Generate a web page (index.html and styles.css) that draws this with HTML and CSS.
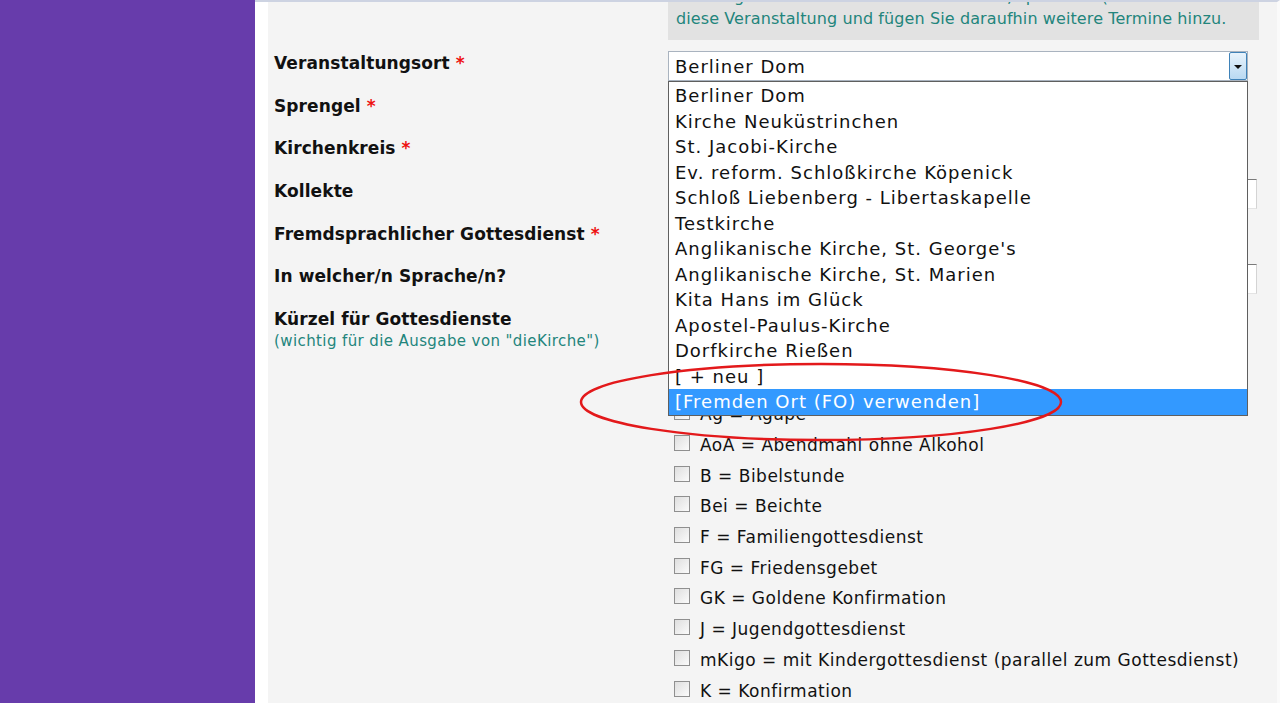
FILE: index.html
```html
<!DOCTYPE html>
<html lang="de">
<head>
    <meta charset="UTF-8">
    <title>Veranstaltung bearbeiten</title>
    <link rel="stylesheet" href="styles.css">
</head>
<body>
    <div class="page">
        <aside class="sidebar"></aside>
        <div class="gutter"></div>
        <main class="content">
            <div class="form">
                <div class="row row-info">
                    <div class="label"></div>
                    <div class="field">
                        <div class="info">Bitte legen Sie zunächst einen Termin an, speichern (Sie erhalten eine ID)<br>diese Veranstaltung und fügen Sie daraufhin weitere Termine hinzu.</div>
                    </div>
                </div>

                <div class="row">
                    <div class="label">Veranstaltungsort <span class="req">*</span></div>
                    <div class="field">
                        <div class="select-wrap">
                            <div class="select">
                                <span>Berliner Dom</span>
                                <span class="arrow"></span>
                            </div>
                            <ul class="options">
                                <li>Berliner Dom</li>
                                <li>Kirche Neuküstrinchen</li>
                                <li>St. Jacobi-Kirche</li>
                                <li>Ev. reform. Schloßkirche Köpenick</li>
                                <li>Schloß Liebenberg - Libertaskapelle</li>
                                <li>Testkirche</li>
                                <li>Anglikanische Kirche, St. George's</li>
                                <li>Anglikanische Kirche, St. Marien</li>
                                <li>Kita Hans im Glück</li>
                                <li>Apostel-Paulus-Kirche</li>
                                <li>Dorfkirche Rießen</li>
                                <li>[ + neu ]</li>
                                <li class="selected">[Fremden Ort (FO) verwenden]</li>
                            </ul>
                        </div>
                    </div>
                </div>

                <div class="row">
                    <div class="label">Sprengel <span class="req">*</span></div>
                    <div class="field"><div class="select small"><span></span><span class="arrow"></span></div></div>
                </div>

                <div class="row">
                    <div class="label">Kirchenkreis <span class="req">*</span></div>
                    <div class="field"><div class="select small"><span></span><span class="arrow"></span></div></div>
                </div>

                <div class="row">
                    <div class="label">Kollekte</div>
                    <div class="field"><div class="input"></div></div>
                </div>

                <div class="row">
                    <div class="label">Fremdsprachlicher Gottesdienst <span class="req">*</span></div>
                    <div class="field"></div>
                </div>

                <div class="row">
                    <div class="label">In welcher/n Sprache/n?</div>
                    <div class="field"><div class="input"></div></div>
                </div>

                <div class="row">
                    <div class="label">
                        Kürzel für Gottesdienste
                        <div class="hint">(wichtig für die Ausgabe von "dieKirche")</div>
                    </div>
                    <div class="field">
                        <ul class="checks">
                            <li><span class="box"></span>A = Abendmahl</li>
                            <li><span class="box"></span>Af = Andacht</li>
                            <li><span class="box"></span>AbM = Abendmusik</li>
                            <li><span class="box"></span>Ag = Agape</li>
                            <li><span class="box"></span>AoA = Abendmahl ohne Alkohol</li>
                            <li><span class="box"></span>B = Bibelstunde</li>
                            <li><span class="box"></span>Bei = Beichte</li>
                            <li><span class="box"></span>F = Familiengottesdienst</li>
                            <li><span class="box"></span>FG = Friedensgebet</li>
                            <li><span class="box"></span>GK = Goldene Konfirmation</li>
                            <li><span class="box"></span>J = Jugendgottesdienst</li>
                            <li><span class="box"></span>mKigo = mit Kindergottesdienst (parallel zum Gottesdienst)</li>
                            <li><span class="box"></span>K = Konfirmation</li>
                        </ul>
                    </div>
                </div>
            </div>
        </main>

        <svg class="marker" width="490" height="86" viewBox="0 0 490 86">
            <ellipse cx="244" cy="43" rx="240" ry="38" fill="none" stroke="#e3191b" stroke-width="2.5"/>
        </svg>
    </div>
</body>
</html>
```

FILE: styles.css
```css
body {
    margin: 0;
    padding: 0;
    font-family: "DejaVu Sans", Verdana, sans-serif;
    color: #111;
    overflow: hidden;
}
.page {
    display: flex;
    height: 703px;
    position: relative;
}
.sidebar {
    width: 255px;
    flex-shrink: 0;
    background-color: #673cab;
}
.gutter {
    width: 13px;
    flex-shrink: 0;
    background-color: #fff;
    border-top: 2px solid #cdd3e2;
}
.content {
    flex: 1;
    background-color: #f4f4f4;
    border-top: 2px solid #cdd3e2;
    border-right: 3px solid #fafafa;
    overflow: hidden;
}
.form {
    padding: 0 18px 0 6px;
    margin-top: -16px;
}
.row {
    display: grid;
    grid-template-columns: 394px minmax(0, 1fr);
    min-height: 30.67px;
    padding-bottom: 12px;
}
.row-info {
    padding-bottom: 11px;
}
.label {
    font-weight: bold;
    font-size: 17px;
    letter-spacing: 0.1px;
    line-height: 24px;
}
.req {
    color: #ee1111;
}
.hint {
    font-weight: normal;
    font-size: 15px;
    letter-spacing: 0.4px;
    line-height: 20px;
    color: #23857c;
}
.info {
    background-color: #e2e2e2;
    color: #23857c;
    font-size: 16px;
    letter-spacing: 0.1px;
    line-height: 22px;
    padding: 0 8px 10px;
    white-space: nowrap;
    overflow: hidden;
}

/* select box and open dropdown */
.select-wrap {
    position: relative;
    width: 580px;
    z-index: 5;
}
.select {
    height: 30px;
    box-sizing: border-box;
    border: 1px solid #a9b3bf;
    background-color: #fff;
    display: flex;
    align-items: center;
    justify-content: space-between;
    padding-left: 6px;
    font-size: 18px;
    letter-spacing: 1px;
}
.select.small {
    width: 300px;
}
.arrow {
    width: 18px;
    height: 28px;
    box-sizing: border-box;
    border: 1px solid #3f82b8;
    border-radius: 2px;
    background: linear-gradient(#e8f3fc, #b9d9f2);
    position: relative;
}
.arrow::after {
    content: "";
    position: absolute;
    left: 4px;
    top: 12px;
    border-left: 4px solid transparent;
    border-right: 4px solid transparent;
    border-top: 4px solid #111;
}
.options {
    position: absolute;
    top: 30px;
    left: 0;
    width: 580px;
    box-sizing: border-box;
    margin: 0;
    padding: 1px 0 0;
    list-style: none;
    background-color: #fff;
    border: 1px solid #5f5f5f;
    font-size: 18px;
    letter-spacing: 1px;
}
.options li {
    height: 25.5px;
    line-height: 25.5px;
    padding-left: 6px;
}
.options li.selected {
    background-color: #3399ff;
    color: #fff;
}

.input {
    height: 30px;
    width: 589px;
    box-sizing: border-box;
    border: 1px solid #8a8a8a;
    border-color: #7a7a7a #d4d4d4 #e4e4e4 #aaa;
    background-color: #fff;
}

/* checkbox list */
.checks {
    margin: 0;
    padding: 0 0 0 6px;
    list-style: none;
    font-size: 17px;
    letter-spacing: 0.5px;
}
.checks li {
    height: 30.7px;
    display: flex;
    align-items: center;
    gap: 10px;
}
.box {
    width: 14px;
    height: 14px;
    border: 1px solid #8f8f8f;
    background: linear-gradient(135deg, #dedede, #fbfbfb);
    flex-shrink: 0;
    margin-top: -4px;
}

.marker {
    position: absolute;
    left: 577px;
    top: 359px;
    z-index: 10;
}
```
